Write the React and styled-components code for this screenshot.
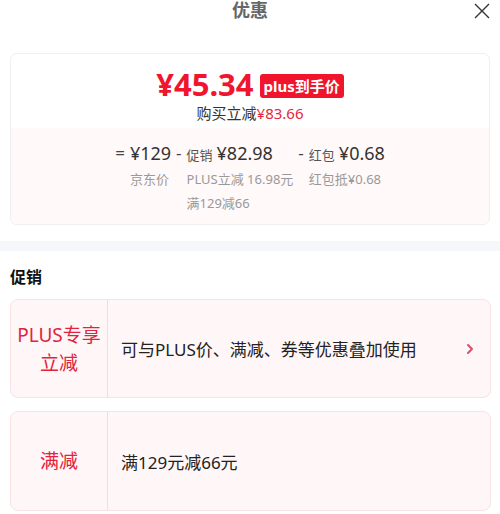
import React from "react";
import styled, { createGlobalStyle } from "styled-components";

const GlobalStyle = createGlobalStyle`
  html, body { margin: 0; padding: 0; background: #fff; }
  body {
    font-family: "Noto Sans", "Noto Sans CJK SC", sans-serif;
    color: #333;
    width: 500px;
    overflow: hidden;
  }
`;

const Page = styled.div`
  width: 500px;
  height: 514px;
  overflow: hidden;
`;

const Header = styled.header`
  position: relative;
  height: 20px;
  display: flex;
  justify-content: center;
  align-items: center;
`;

const Title = styled.h1`
  margin: 0;
  font-size: 18px;
  line-height: 20px;
  font-weight: 700;
  color: #666;
`;

const Close = styled.button`
  position: absolute;
  right: 9px;
  top: 2px;
  width: 18px;
  height: 18px;
  padding: 0;
  border: none;
  background: none;
  display: flex;
`;

const PriceCard = styled.section`
  margin: 33px 10px 0;
  border: 1px solid #f0eeee;
  border-radius: 7px;
  overflow: hidden;
`;

const PriceTop = styled.div`
  padding: 13px 0 5px;
  display: flex;
  flex-direction: column;
  align-items: center;
`;

const PriceLine = styled.div`
  display: flex;
  align-items: center;
  gap: 6px;
  height: 34px;
`;

const BigPrice = styled.span`
  font-size: 31px;
  font-weight: 700;
  color: #f0142d;
`;

const Badge = styled.span`
  background: #f0142d;
  color: #fff;
  font-size: 15px;
  font-weight: 700;
  line-height: 24px;
  padding: 0 4px;
  border-radius: 3px;
  margin-top: 3px;
`;

const SaveLine = styled.div`
  font-size: 15px;
  line-height: 20px;
  color: #333;
  margin-top: 2px;
`;

const Red = styled.span`
  color: #e8233d;
`;

const Breakdown = styled.div`
  background: #fff9f9;
  padding: 13px 0 9px;
  display: flex;
  justify-content: center;
`;

const Formula = styled.div`
  display: grid;
  grid-template-columns: repeat(6, auto);
  column-gap: 5px;
  line-height: 24px;
`;

const Op = styled.span`
  font-size: 17px;
  color: #444;
`;

const Value = styled.span`
  font-size: 18px;
  color: #333;
  white-space: nowrap;
`;

const Tag = styled.span`
  font-size: 13px;
  color: #555;
  margin-right: 4px;
`;

const Note = styled.span`
  font-size: 13px;
  color: #999;
  white-space: nowrap;
  grid-column: ${(p) => p.col};
`;

const Band = styled.div`
  height: 10px;
  margin-top: 16px;
  background: #f6f7fa;
`;

const SectionTitle = styled.h2`
  margin: 16px 10px 12px;
  font-size: 16px;
  line-height: 20px;
  font-weight: 700;
  color: #111;
`;

const PromoList = styled.div`
  display: flex;
  flex-direction: column;
  gap: 13px;
  padding: 0 9px 0 10px;
`;

const Promo = styled.div`
  display: flex;
  height: ${(p) => p.h}px;
  background: #fff6f7;
  border: 1px solid #f7e3e6;
  border-radius: 8px;
`;

const PromoLabel = styled.div`
  width: 96px;
  flex-shrink: 0;
  border-right: 1px solid #f1dde0;
  display: flex;
  align-items: center;
  justify-content: center;
  text-align: center;
  font-size: 19px;
  line-height: 28px;
  color: #e2233f;
`;

const PromoText = styled.div`
  flex: 1;
  display: flex;
  align-items: center;
  padding-left: 13px;
  font-size: 17px;
  color: #222;
`;

const Chevron = styled.span`
  display: flex;
  align-items: center;
  padding-right: 16px;
`;

const ChevronIcon = () => (
  <svg width="8" height="12" viewBox="0 0 8 12">
    <path d="M2 2l4 4-4 4" fill="none" stroke="#d9506a" strokeWidth="2" strokeLinecap="round" strokeLinejoin="round" />
  </svg>
);

export default function App() {
  return (
    <Page>
      <GlobalStyle />
      <Header>
        <Title>优惠</Title>
        <Close aria-label="关闭">
          <svg width="18" height="18" viewBox="0 0 18 18">
            <path d="M2 2l14 14M16 2L2 16" stroke="#333" strokeWidth="1.4" fill="none" />
          </svg>
        </Close>
      </Header>

      <PriceCard>
        <PriceTop>
          <PriceLine>
            <BigPrice>¥45.34</BigPrice>
            <Badge>plus到手价</Badge>
          </PriceLine>
          <SaveLine>
            购买立减<Red>¥83.66</Red>
          </SaveLine>
        </PriceTop>
        <Breakdown>
          <Formula>
            <Op>=</Op>
            <Value>¥129</Value>
            <Op>-</Op>
            <Value>
              <Tag>促销</Tag>¥82.98
            </Value>
            <Op>-</Op>
            <Value>
              <Tag>红包</Tag>¥0.68
            </Value>
            <Note col={2}>京东价</Note>
            <Note col={4}>PLUS立减 16.98元</Note>
            <Note col={6}>红包抵¥0.68</Note>
            <Note col={4}>满129减66</Note>
          </Formula>
        </Breakdown>
      </PriceCard>

      <Band />

      <SectionTitle>促销</SectionTitle>
      <PromoList>
        <Promo h={97}>
          <PromoLabel>
            PLUS专享
            <br />
            立减
          </PromoLabel>
          <PromoText>可与PLUS价、满减、券等优惠叠加使用</PromoText>
          <Chevron>
            <ChevronIcon />
          </Chevron>
        </Promo>
        <Promo h={98}>
          <PromoLabel>满减</PromoLabel>
          <PromoText>满129元减66元</PromoText>
        </Promo>
      </PromoList>
    </Page>
  );
}
